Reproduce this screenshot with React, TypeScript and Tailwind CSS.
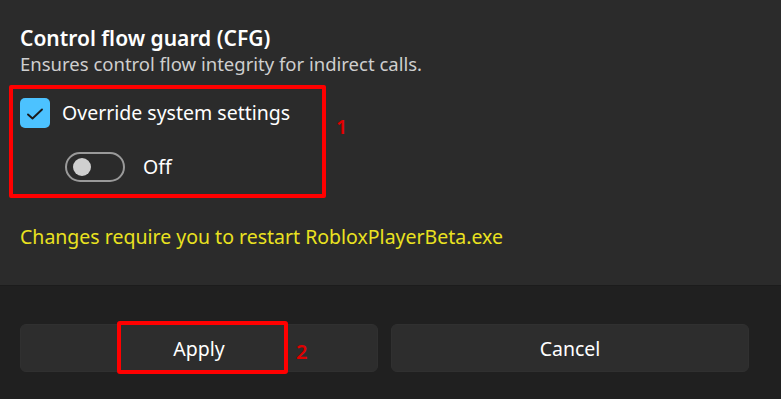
import React from "react";

export default function App() {
  const font = { fontFamily: '"Noto Sans", "Open Sans", sans-serif' };
  return (
    <div className="relative w-[781px] h-[399px] overflow-hidden bg-[#202020] text-white" style={font}>
      <div className="h-[286px] bg-[#2b2b2b] border-b border-[#1c1c1c] pl-[20px] pt-[24px]">
        <div className="text-[21px] leading-[28px] font-semibold text-white">Control flow guard (CFG)</div>
        <div className="text-[18.5px] leading-[24px] text-[#cfcfcf]">Ensures control flow integrity for indirect calls.</div>
        <div className="mt-[22px] flex items-center gap-[12px] h-[30px]">
          <div className="w-[30px] h-[30px] rounded-[5px] bg-[#4cc2ff] flex items-center justify-center">
            <svg width="18" height="18" viewBox="0 0 18 18" fill="none" className="mt-[2px]">
              <path d="M2 9.5 L6.5 13.5 L16 4.5" stroke="#1a1a1a" strokeWidth="1.9" strokeLinecap="round" strokeLinejoin="round" />
            </svg>
          </div>
          <span className="text-[19.5px] leading-[24px] text-white">Override system settings</span>
        </div>
        <div className="mt-[24px] ml-[45px] flex items-center gap-[18px] h-[30px]">
          <div className="w-[60px] h-[30px] rounded-full border-2 border-[#9a9a9a] flex items-center pl-[6px]">
            <div className="w-[18px] h-[18px] rounded-full bg-[#cfcfcf]" />
          </div>
          <span className="text-[19.5px] leading-[24px] text-white">Off</span>
        </div>
        <div className="mt-[43px] text-[19.5px] leading-[24px] text-[#eae220]">Changes require you to restart RobloxPlayerBeta.exe</div>
      </div>
      <div className="flex gap-[13px] pl-[20px] pr-[32px] pt-[38px]">
        <button className="flex-1 h-[48px] pt-[2px] rounded-[6px] bg-[#2d2d2d] border border-[#303030] text-[19.5px] text-white">Apply</button>
        <button className="flex-1 h-[48px] pt-[2px] rounded-[6px] bg-[#2d2d2d] border border-[#303030] text-[19.5px] text-white">Cancel</button>
      </div>
      <div className="absolute left-[9px] top-[85px] w-[317px] h-[113px] border-[4px] border-[#ff0000] rounded-[2px]" />
      <div className="absolute left-[336px] top-[115px] text-[20px] leading-[24px] font-semibold text-[#e00000]">1</div>
      <div className="absolute left-[117px] top-[321px] w-[171px] h-[53px] border-[4px] border-[#ff0000] rounded-[3px]" />
      <div className="absolute left-[296px] top-[340px] text-[20px] leading-[24px] font-semibold text-[#e00000]">2</div>
    </div>
  );
}
